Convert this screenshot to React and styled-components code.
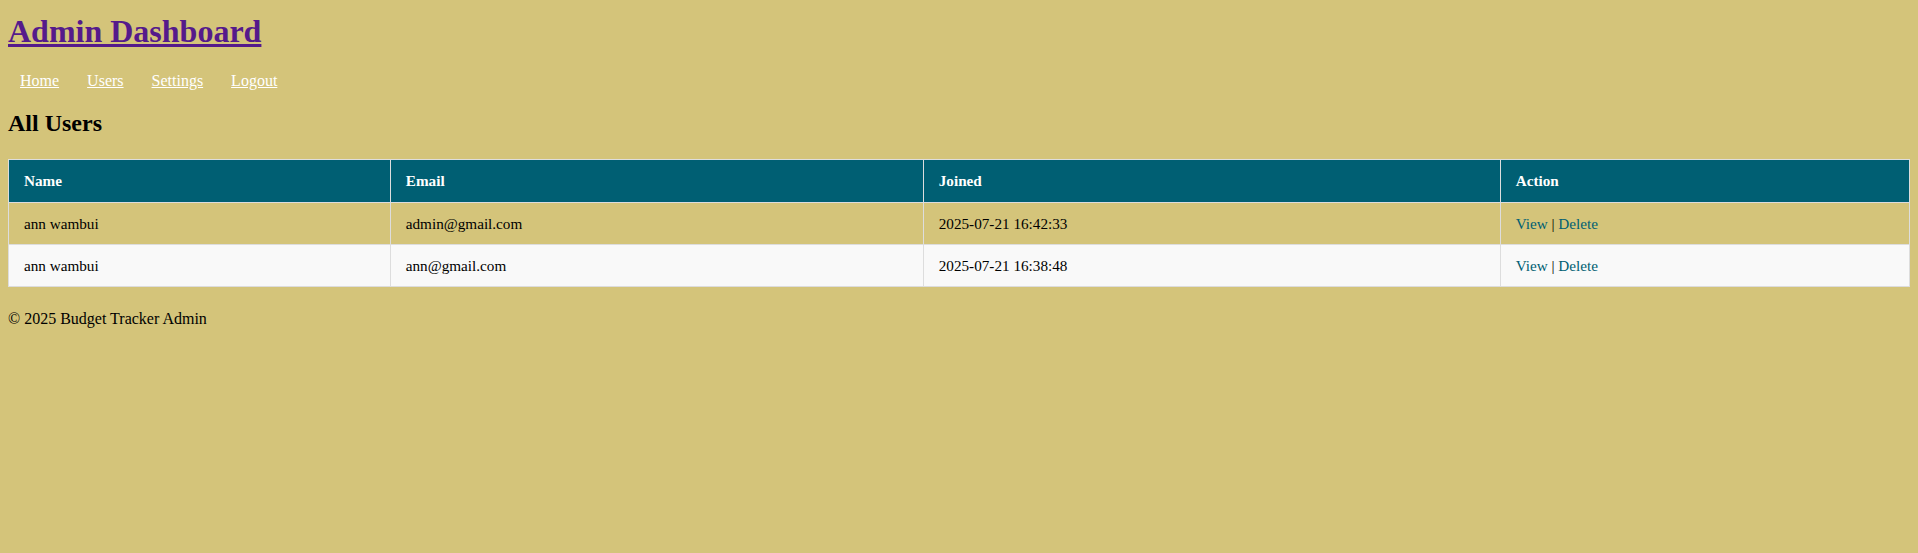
import React from 'react'
import styled, { createGlobalStyle } from 'styled-components'

const GlobalStyle = createGlobalStyle`
  body {
    margin: 0;
    background: #d4c47a;
    font-family: "Liberation Serif", "Times New Roman", serif;
    color: #000;
  }
`;

const Page = styled.div`
  padding: 0 8px;
`;

const Title = styled.h1`
  font-size: 32px;
  font-weight: bold;
  margin: 13px 0 22px;
`;

const TitleLink = styled.a`
  color: #551a8b;
  text-decoration: underline;
`;

const Nav = styled.nav`
  display: flex;
  gap: 28px;
  padding-left: 12px;
  font-size: 16px;
`;

const NavLink = styled.a`
  color: #fff;
  text-decoration: underline;
`;

const Heading = styled.h2`
  font-size: 24px;
  font-weight: bold;
  margin: 20px 0 22px;
`;

const Table = styled.table`
  width: 100%;
  border-collapse: collapse;
  font-size: 0.95em;
`;

const Th = styled.th`
  background: #005f73;
  color: #fff;
  text-align: left;
  padding: 12px 15px;
  line-height: 18px;
  border: 1px solid #ddd;
`;

const Row = styled.tr`
  background: ${({ $alt }) => ($alt ? '#f9f9f9' : 'transparent')};
`;

const Td = styled.td`
  padding: 12px 15px;
  line-height: 17px;
  border: 1px solid #ddd;
`;

const ActionLink = styled.a`
  color: #005f73;
  text-decoration: none;
`;

const Footer = styled.footer`
  margin-top: 23px;
  font-size: 16px;
`;

const users = [
  { name: 'ann wambui', email: 'admin@gmail.com', joined: '2025-07-21 16:42:33' },
  { name: 'ann wambui', email: 'ann@gmail.com', joined: '2025-07-21 16:38:48' },
];

const App = () => {
  return (
    <Page>
      <GlobalStyle />
      <Title>
        <TitleLink href="#">Admin Dashboard</TitleLink>
      </Title>
      <Nav>
        <NavLink href="#">Home</NavLink>
        <NavLink href="#">Users</NavLink>
        <NavLink href="#">Settings</NavLink>
        <NavLink href="#">Logout</NavLink>
      </Nav>
      <Heading>All Users</Heading>
      <Table>
        <thead>
          <tr>
            <Th>Name</Th>
            <Th>Email</Th>
            <Th>Joined</Th>
            <Th>Action</Th>
          </tr>
        </thead>
        <tbody>
          {users.map((u, i) => (
            <Row key={u.email} $alt={i % 2 === 1}>
              <Td>{u.name}</Td>
              <Td>{u.email}</Td>
              <Td>{u.joined}</Td>
              <Td>
                <ActionLink href="#">View</ActionLink> | <ActionLink href="#">Delete</ActionLink>
              </Td>
            </Row>
          ))}
        </tbody>
      </Table>
      <Footer>© 2025 Budget Tracker Admin</Footer>
    </Page>
  )
}

export default App
